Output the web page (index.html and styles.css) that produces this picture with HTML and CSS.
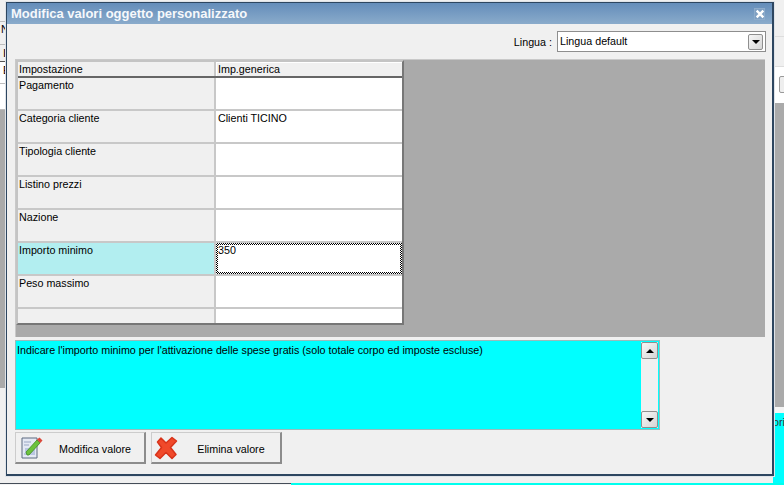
FILE: index.html
```html
<!DOCTYPE html>
<html lang="it">
<head>
<meta charset="utf-8">
<title>Modifica valori oggetto personalizzato</title>
<link rel="stylesheet" href="styles.css">
</head>
<body>
<div class="desktop">
  <div class="bg-left">
    <div class="bg-l-top"></div>
    <div class="bg-l-row bg-l-n">N</div>
    <div class="bg-l-row bg-l-i">I</div>
    <div class="bg-l-row bg-l-e">E</div>
    <div class="bg-l-row bg-l-blank"></div>
    <div class="bg-l-grey"></div>
    <div class="bg-l-rest"></div>
  </div>
  <div class="bg-right">
    <div class="bg-r-top"></div>
    <div class="bg-r-row"><span class="bg-r-btn"></span></div>
    <div class="bg-r-grey"></div>
    <div class="bg-r-gap"></div>
    <div class="bg-r-cyan">ori</div>
  </div>
  <div class="bg-bottom">
    <div class="bg-b-white"></div>
    <div class="bg-b-cyan"></div>
  </div>

  <section class="dialog">
    <header class="titlebar">
      <span class="title">Modifica valori oggetto personalizzato</span>
      <span class="close">
        <svg viewBox="0 0 12 12" width="12" height="12"><path d="M2 2 L10 10 M10 2 L2 10" stroke="#fff" stroke-width="2.8" fill="none"/></svg>
      </span>
    </header>
    <div class="body">
      <div class="lang-row">
        <span class="lang-label">Lingua :</span>
        <div class="select">
          <span class="select-text">Lingua default</span>
          <span class="sbtn"><i class="tri-down"></i></span>
        </div>
      </div>
      <div class="grid-area">
        <div class="grid">
          <div class="row head"><div class="c1">Impostazione</div><div class="c2">Imp.generica</div></div>
          <div class="row"><div class="c1">Pagamento</div><div class="c2"></div></div>
          <div class="row"><div class="c1">Categoria cliente</div><div class="c2">Clienti TICINO</div></div>
          <div class="row"><div class="c1">Tipologia cliente</div><div class="c2"></div></div>
          <div class="row"><div class="c1">Listino prezzi</div><div class="c2"></div></div>
          <div class="row"><div class="c1">Nazione</div><div class="c2"></div></div>
          <div class="row active"><div class="c1">Importo minimo</div><div class="c2"><span class="focus"><span class="focus-in">350</span></span></div></div>
          <div class="row"><div class="c1">Peso massimo</div><div class="c2"></div></div>
          <div class="row last"><div class="c1"></div><div class="c2"></div></div>
        </div>
      </div>
      <div class="hint">
        <p class="hint-text">Indicare l'importo minimo per l'attivazione delle spese gratis (solo totale corpo ed imposte escluse)</p>
        <div class="scroll">
          <span class="sbtn"><i class="tri-up"></i></span>
          <span class="track"></span>
          <span class="sbtn"><i class="tri-down"></i></span>
        </div>
      </div>
      <div class="actions">
        <button class="btn" type="button">
          <svg class="ico" viewBox="0 0 24 24" width="24" height="24">
            <path d="M2 2 H17 V22 H2 Z" fill="#e4e9f4" stroke="#5c6a80" stroke-width="1"/>
            <path d="M4 6 H11 M4 9 H9 M4 18 H15" stroke="#9aa7c4" stroke-width="1.2"/>
            <rect x="5" y="12" width="10" height="7" fill="#b9c6e2"/>
            <path d="M7 19 L6 16 L17 4 L20 7 L9 19 Z" fill="#6cc23c" stroke="#3f8a25" stroke-width=".8"/>
            <path d="M17 3.5 L19.5 1.5 L22.5 4.5 L20.3 7 Z" fill="#d9483a"/>
          </svg>
          <span class="btn-label lab1">Modifica valore</span>
        </button>
        <button class="btn" type="button">
          <svg class="ico ico-x" viewBox="0 0 24 24" width="24" height="24">
            <path d="M3.500 6 L7 2 L12 7 L18 1.500 L22.500 5 L16.500 11.500 L22 18.500 L18 22.500 L12 16.500 L6 22.500 L1.500 19 L7.500 11.500 Z" fill="#f0492a" stroke="#d8331a" stroke-width="1.500" stroke-linejoin="round"/>
          </svg>
          <span class="btn-label lab2">Elimina valore</span>
        </button>
      </div>
    </div>
  </section>
</div>
</body>
</html>
```
FILE: styles.css
```css
* { box-sizing: border-box; }
html, body { margin: 0; padding: 0; }
body { width: 784px; height: 485px; overflow: hidden; background: #f0f0f0; font-family: "Liberation Sans", Arial, sans-serif; font-size: 10.73px; color: #000; }
.desktop { position: relative; width: 784px; height: 485px; overflow: hidden; }

.bg-left { position: absolute; left: 0; top: 0; width: 7px; height: 485px; display: flex; flex-direction: column; background: #f0f0f0; }
.bg-l-top { height: 22px; border-bottom: 1px solid #bdbdbd; }
.bg-l-row { font-size: 11px; line-height: 13px; overflow: hidden; background: #fff; border-bottom: 1px solid #bdbdbd; }
.bg-l-n { height: 23px; padding-top: 1px; background: #f0f0f0; padding-left: 1px; }
.bg-l-i { height: 17px; padding-top: 2px; padding-left: 3px; background: #f0f0f0; border-bottom: 1px solid #555; }
.bg-l-e { height: 22px; padding-top: 2px; padding-left: 3px; }
.bg-l-blank { height: 26px; }
.bg-l-grey { height: 278px; background: #aaa; }
.bg-l-rest { flex: 1; background: #f0f0f0; }

.bg-right { position: absolute; left: 774px; top: 0; width: 10px; height: 485px; display: flex; flex-direction: column; background: #f0f0f0; }
.bg-r-top { height: 37px; border-bottom: 1px solid #ddd; }
.bg-r-row { margin-top: 29px; height: 37px; background: #fff; border-top: 1px solid #ddd; padding: 9px 0 0 5px; }
.bg-r-btn { display: block; width: 10px; height: 17px; border: 1px solid #999; border-radius: 2px; background: #eee; }
.bg-r-grey { height: 304px; background: #aaa; }
.bg-r-gap { height: 6px; background: #f4f4f4; }
.bg-r-cyan { flex: 1; background: #0ff; padding: 3px 0 0 0; margin-left: -1px; line-height: 13px; color: #333; }

.bg-bottom { position: absolute; left: 0; top: 483px; width: 784px; height: 2px; display: flex; background: #444d58; }
.bg-b-white { width: 291px; background: linear-gradient(#444d58 1px, #f4f4f4 0); }
.bg-b-cyan { flex: 1; background: #0fe; }

.dialog { position: absolute; left: 6px; top: 2px; width: 768px; height: 474px; border: 1px solid #2d4660; border-width: 1px 2px 2px 1px; background: #f0f0f0; display: flex; flex-direction: column; box-shadow: 0 0 0 1px #dfe3e8; }
.titlebar { height: 21px; flex: none; display: flex; align-items: center; justify-content: space-between; padding: 0 7px 0 4px; background: linear-gradient(#648dba, #8aabcb); }
.title { color: #f6f8fb; font: bold 13px "Liberation Sans", Arial, sans-serif; line-height: 20px; }
.close { width: 11px; height: 12px; display: flex; align-items: center; justify-content: center; border: 1px solid #8eaccb; background: #7fa0c3; }
.close svg { width: 10px; height: 10px; flex: none; }

.body { flex: 1; padding: 6px 0 0 8px; display: flex; flex-direction: column; }
.lang-row { height: 23px; flex: none; display: flex; justify-content: flex-end; align-items: center; gap: 5px; padding-right: 6px; }
.select { width: 209px; height: 21px; border: 1px solid #8e8e8e; background: #fff; display: flex; align-items: center; justify-content: space-between; padding: 0 2px 0 2px; color: #000; }
.select-text { line-height: 19px; }
.select .sbtn { width: 15px; height: 16px; }
.sbtn { display: flex; align-items: center; justify-content: center; flex: none; width: 17px; height: 17px; border: 1px solid #8f8f8f; border-radius: 2px; background: linear-gradient(135deg, #f7f7f7, #d6d6d6); }
.tri-down, .tri-up { display: block; width: 0; height: 0; border-left: 4px solid transparent; border-right: 4px solid transparent; }
.tri-down { border-top: 4px solid #000; }
.tri-up { border-bottom: 4px solid #000; }

.grid-area { margin-top: 6px; width: 750px; height: 278px; flex: none; background: #aaa; border-top: 1px solid #c9c9c9; border-left: 1px solid #c9c9c9; }
.grid { width: 388px; height: 265px; background: #fff; border: 2px solid #c4c4c4; border-right-color: #777; border-bottom-color: #777; display: flex; flex-direction: column; overflow: hidden; }
.row { display: grid; grid-template-columns: 198px 1fr; height: 33px; flex: none; border-bottom: 2px solid #c8c8c8; line-height: 14px; }
.row .c1 { background: #f0f0f0; border-right: 2px solid #c8c8c8; padding: 0 0 0 1px; }
.row .c2 { background: #fff; padding: 0 0 0 2px; }
.row.head { height: 16px; border-bottom: 2px solid #666; }
.row.head .c2 { background: #f0f0f0; box-shadow: inset 1px 1px 0 #fff; }
.row.last { height: 16px; border-bottom: 0; flex: 1; }
.row.active .c1 { background: #b2eef0; }
.row.active .c2 { padding: 0; }
.focus { display: block; height: 31px; padding: 2px; background: conic-gradient(#000 25%, #fff 0 50%, #000 0 75%, #fff 0) 0 0 / 2px 2px; }
.focus-in { display: block; height: 100%; background: #fff; padding-left: 0; line-height: 11px; }

.hint { margin-top: 3px; width: 645px; height: 90px; flex: none; background: #0ff; border: 1px solid #9bb; display: flex; justify-content: space-between; padding: 0 1px 0 0; }
.hint-text { margin: 0; padding: 2px 0 0 1px; line-height: 14px; }
.scroll { width: 17px; display: flex; flex-direction: column; background: #f0f0f0; margin: 1px 0; }
.track { flex: 1; }

.actions { margin-top: 2px; display: flex; gap: 5px; }
.btn { width: 131px; height: 32px; padding: 0; border: 1px solid #ccc; border-right: 2px solid #8c8c8c; border-bottom: 2px solid #8c8c8c; background: #f0f0f0; display: flex; align-items: center; font: inherit; color: #000; text-align: left; }
.ico { margin-left: 4px; flex: none; }
.ico-x { margin-left: 2px; }
.btn-label { flex: 1; text-align: center; line-height: 14px; padding-top: 3px; }
.lab1 { padding-left: 2px; }
.lab2 { padding-left: 4px; }
```
